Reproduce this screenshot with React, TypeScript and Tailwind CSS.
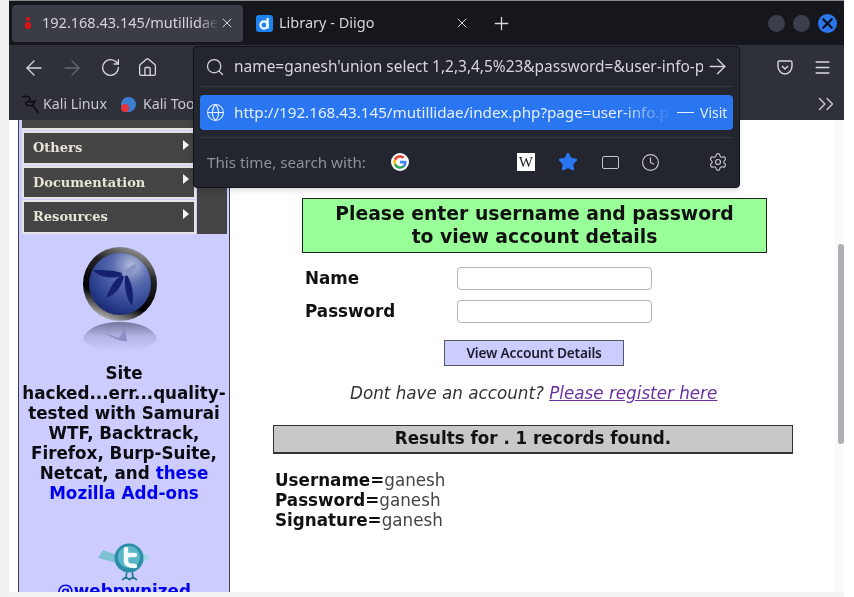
import { ArrowLeft, ArrowRight, ChevronsRight, Clock, Globe, Home, Menu, Plus, RotateCw, Search, Settings, Star, X } from 'lucide-react'

const UI_FONT = "font-['Noto_Sans',sans-serif]"
const PAGE_FONT = "font-['DejaVu_Sans',sans-serif]"

function OwaspLogo() {
  return (
    <svg width="78" height="106" viewBox="0 0 78 106" className="mr-[9px]">
      <defs>
        <linearGradient id="ring" x1="0.7" y1="0" x2="0.3" y2="1">
          <stop offset="0" stopColor="#9a9a9a" />
          <stop offset="0.3" stopColor="#222" />
          <stop offset="0.7" stopColor="#000" />
          <stop offset="1" stopColor="#c4c4c4" />
        </linearGradient>
        <radialGradient id="face" cx="0.68" cy="0.2" r="0.85">
          <stop offset="0" stopColor="#b4bcdc" />
          <stop offset="0.35" stopColor="#5a6db0" />
          <stop offset="0.8" stopColor="#2b3f90" />
          <stop offset="1" stopColor="#1b2a70" />
        </radialGradient>
        <linearGradient id="mirror" x1="0" y1="0" x2="0" y2="1">
          <stop offset="0" stopColor="#74779f" />
          <stop offset="0.5" stopColor="#b4b6e6" />
          <stop offset="1" stopColor="#ccccff" />
        </linearGradient>
      </defs>
      <circle cx="39" cy="38" r="37" fill="url(#ring)" />
      <circle cx="39" cy="38" r="31" fill="url(#face)" />
      <g fill="#15206e">
        <path d="M41 27 C32 24 22 24 12 24 C16 30 30 34 40 30 Z" />
        <path d="M41 29 C37 31 31 36 25 52 C33 49 39 44 43 31 Z" />
        <path d="M44 29 C43 38 44 50 51 60 C53 50 52 40 46 29 Z" />
      </g>
      <path d="M41 27 L50 20 C53 17 57 18 55 22 C53 26 48 29 44 30 Z" fill="#8a94c4" />
      <path d="M2 93 C6 81 22 76 39 76 C56 76 72 81 76 93 C70 103 56 106 39 106 C22 106 8 103 2 93 Z" fill="url(#mirror)" />
      <path d="M24 87 L38 92 L44 82 L46 95 C40 96 32 92 24 87 Z" fill="#8b8fc8" />
    </svg>
  )
}

function TwitterBird() {
  return (
    <svg width="54" height="38" viewBox="0 0 54 38">
      <path d="M1 15 L6 7 L20 12 L20 20 Z" fill="#7fc0d4" />
      <path d="M46 10 L53 15 L46 19 Z" fill="#9ad6e2" />
      <path d="M30 28 L29 34 M35 28 L36 34 M25 37 L29 34 L33 37 M32 37 L36 34 L40 37" stroke="#23798f" strokeWidth="1.600" fill="none" />
      <circle cx="32" cy="15" r="14.500" fill="#2b8ea6" />
      <circle cx="32" cy="14" r="11" fill="#5ab6c9" />
      <path d="M29 6 V18 C29 22 32 23 38 23 M29 12 H38" stroke="#f2fbfd" strokeWidth="4.500" fill="none" strokeLinecap="round" />
    </svg>
  )
}

function KaliDragon() {
  return (
    <svg width="17" height="19" viewBox="0 0 17 19" fill="none" stroke="#0d0d0f" strokeWidth="1.500" className="mb-[2px]">
      <path d="M0 2 C4 0 9 2 8 5 C7 8 3 6 4 9 C5 12 11 9 13 13 L16 18 M8 7 L13 6 L10 11" />
    </svg>
  )
}

function GoogleIcon() {
  return (
    <svg width="18" height="18" viewBox="0 0 48 48" className="rounded-full bg-white p-[2px]">
      <path fill="#EA4335" d="M24 9.500c3.500 0 6.700 1.300 9.100 3.500l6.800-6.800C35.800 2.400 30.300 0 24 0 14.600 0 6.600 5.400 2.600 13.200l7.900 6.100C12.400 13.600 17.700 9.500 24 9.500z" />
      <path fill="#4285F4" d="M46.900 24.500c0-1.600-.1-3.100-.4-4.500H24v9h12.900c-.6 3-2.200 5.500-4.700 7.200l7.700 6c4.500-4.200 7-10.300 7-17.700z" />
      <path fill="#FBBC05" d="M10.500 28.700c-.5-1.400-.8-3-.8-4.700s.3-3.200.8-4.700l-7.900-6.100C.9 16.500 0 20.100 0 24s.9 7.500 2.600 10.800l7.900-6.100z" />
      <path fill="#34A853" d="M24 48c6.500 0 11.900-2.100 15.900-5.800l-7.700-6c-2.200 1.400-4.900 2.300-8.200 2.300-6.300 0-11.600-4.200-13.500-9.800l-7.900 6.100C6.600 42.600 14.600 48 24 48z" />
    </svg>
  )
}

function DiigoIcon() {
  return (
    <svg width="17" height="17" viewBox="0 0 17 17">
      <rect width="17" height="17" rx="3" fill="#1c83f0" />
      <circle cx="8" cy="10" r="3.600" fill="none" stroke="#fff" strokeWidth="2.200" />
      <path d="M11.600 3 V13.500" stroke="#fff" strokeWidth="2.200" />
    </svg>
  )
}

function NavMenuItem({ label }: { label: string }) {
  return (
    <div className="flex h-[33.500px] w-[174px] items-center justify-between border-2 border-[#e4e4e4] bg-[#444444] pl-[9px] pr-[5px]">
      <span className="font-['DejaVu_Serif',serif] text-[13px] font-bold text-[#e9e4d8]">{label}</span>
      <span className="mb-[6px] h-0 w-0 border-y-[5px] border-l-[6px] border-y-transparent border-l-[#f4f4f4]" />
    </div>
  )
}

function BrowserChrome() {
  return (
    <header className={`${UI_FONT} shrink-0`}>
      <div className="flex h-[45px] items-center border-t border-[#8a8a8a] bg-[#16171c] pl-[3px] text-[14.500px] text-[#d4d5d9]">
        <div className="flex h-[37px] w-[231px] items-center rounded bg-[#3b3d46] pl-[9px] pr-[8px]">
          <span className="flex w-[21px] flex-col items-start gap-px pl-[4px]">
            <span className="ml-[1px] h-[4px] w-[4px] rounded-full bg-[#e01010]" />
            <span className="h-[7px] w-[6px] rounded-full bg-[#e01010]" />
          </span>
          <span className="min-w-0 flex-1 overflow-hidden whitespace-nowrap [mask-image:linear-gradient(to_right,black_88%,transparent)]">192.168.43.145/mutillidae</span>
          <X size={16} strokeWidth={1.500} />
        </div>
        <div className="flex w-[231px] items-center pl-[13px] pr-[4px]">
          <DiigoIcon />
          <span className="ml-[6px] flex-1">Library - Diigo</span>
          <X size={16} strokeWidth={1.500} />
        </div>
        <Plus size={21} strokeWidth={1.500} className="ml-[17px]" />
        <div className="ml-auto flex items-center gap-[8px] pr-[7px]">
          <span className="h-[17px] w-[17px] rounded-full bg-[#3a3f4b]" />
          <span className="h-[17px] w-[17px] rounded-full bg-[#3a3f4b]" />
          <span className="flex h-[19px] w-[19px] items-center justify-center rounded-full bg-[#2a76ee]">
            <X size={17} strokeWidth={3} color="#0d0d12" />
          </span>
        </div>
      </div>
      <div className="flex h-[45px] items-center bg-[#2f313a] pl-[13px] pr-[12px] text-[#d8d9dd]">
        <ArrowLeft size={24} strokeWidth={1.300} />
        <ArrowRight size={24} strokeWidth={1.300} className="ml-[14px] text-[#666872]" />
        <RotateCw size={21} strokeWidth={1.500} className="ml-[15.500px]" />
        <Home size={21} strokeWidth={1.500} className="ml-[16.500px]" />
        <svg width="16" height="15" viewBox="0 0 16 15" fill="none" stroke="#d8d9dd" strokeWidth="1.400" className="ml-auto mr-[20px]">
          <path d="M2 1 H14 C15 1 15 2 15 3 V6 C15 10 12 14 8 14 C4 14 1 10 1 6 V3 C1 2 1 1 2 1 Z M5 6 L8 9 L11 6" />
        </svg>
        <Menu size={19} strokeWidth={1.800} />
      </div>
      <div className="flex h-[30px] items-center bg-[#2f313a] pl-[13px] pr-[5px] text-[14.200px] text-[#c9cad0]">
        <KaliDragon />
        <span className="mb-[2px] ml-[4px]">Kali Linux</span>
        <span className="relative mb-[2px] ml-[14px] h-[15px] w-[15px] rounded-full bg-[#3a7fd0]">
          <span className="absolute bottom-0 left-0 h-[8px] w-[8px] rounded-full bg-[#e8343c]" />
        </span>
        <span className="mb-[2px] ml-[7px]">Kali Tools</span>
        <ChevronsRight size={26} strokeWidth={1.300} className="mb-[2px] ml-auto" />
      </div>
    </header>
  )
}

function UrlPopup() {
  return (
    <div className={`${UI_FONT} absolute left-[184px] top-[46px] w-[547px] rounded border border-[#14151a] bg-[#23252f] px-[6px] text-[15.200px] text-[#d5d6da] shadow-md`}>
      <div className="flex h-[40px] items-center border-b border-[#34363f] pl-[5px]">
        <Search size={20} strokeWidth={1.500} />
        <span className="ml-[9px] w-[469px] overflow-hidden whitespace-nowrap text-[15.450px]">name=ganesh'union select 1,2,3,4,5%23&amp;password=&amp;user-info-php-submit-button</span>
        <ArrowRight size={25} strokeWidth={1.300} className="ml-[2px]" />
      </div>
      <div className="mt-[7.500px] flex h-[35.500px] items-center rounded bg-[#2a76f0] pl-[6px] text-[#e6effd]">
        <Globe size={19} strokeWidth={1.300} />
        <span className="ml-[9px] w-[438px] overflow-hidden whitespace-nowrap [mask-image:linear-gradient(to_right,black_88%,transparent)]">http://192.168.43.145/mutillidae/index.php?page=user-info.php</span>
        <span className="ml-[5px] flex items-center gap-[6px] whitespace-nowrap text-[14px]">
          <span className="h-px w-[17px] bg-[#e6effd]" />
          Visit
        </span>
      </div>
      <div className="mt-[6.500px] flex h-[50px] items-center border-t border-[#34363f] pl-[7px] pr-[5.500px] text-[#8f9199]">
        <span>This time, search with:</span>
        <span className="ml-[25px] flex"><GoogleIcon /></span>
        <span className="ml-[108px] flex h-[18px] w-[18px] items-center justify-center bg-white font-['Liberation_Serif',serif] text-[15px] leading-none text-[#222]">W</span>
        <Star size={20} className="ml-[23px] fill-[#2a76f0] text-[#2a76f0]" />
        <span className="ml-[24px] h-[13px] w-[17px] rounded-[2px] border-[1.500px] border-[#c4c5ca]" />
        <Clock size={19} strokeWidth={1.500} className="ml-[22.500px] text-[#c4c5ca]" />
        <Settings size={20} strokeWidth={1.400} className="ml-auto text-[#c4c5ca]" />
      </div>
    </div>
  )
}

function Sidebar() {
  return (
    <aside className={`${PAGE_FONT} ml-[9px] flex h-[472px] w-[212px] shrink-0 flex-col overflow-hidden border-x border-[#3c3c50] bg-[#ccccff]`}>
      <div className="flex items-stretch">
        <div className="ml-[3px] flex flex-col gap-[1px]">
          <div className="h-[10px] w-[174px] border-b-2 border-[#e4e4e4] bg-[#444444]" />
          <NavMenuItem label="Others" />
          <NavMenuItem label="Documentation" />
          <NavMenuItem label="Resources" />
        </div>
        <div className="ml-[1px] w-[30px] bg-[#444444]" />
      </div>
      <div className="mt-[12px] flex justify-center">
        <OwaspLogo />
      </div>
      <p className="mt-[11px] text-center text-[16.750px] font-bold leading-[20px] text-[#0c0c10]">
        Site
        <br />
        hacked...err...quality-tested with Samurai WTF, Backtrack, Firefox, Burp-Suite, Netcat, and{' '}
        <span className="text-[#0000ee]">these Mozilla Add-ons</span>
      </p>
      <div className="mt-[40px] flex justify-center">
        <TwitterBird />
      </div>
      <p className="text-center text-[16.750px] font-bold leading-[20px] text-[#0000ee]">@webpwnized</p>
    </aside>
  )
}

function AccountForm() {
  return (
    <main className={`${PAGE_FONT} ml-[43px] w-[520px] pt-[78px] text-[16.750px] text-[#111]`}>
      <div className="ml-[29px] h-[55px] w-[465px] border border-[#222] bg-[#99ff99] pt-[3px] text-center text-[18.800px] font-bold leading-[23px]">
        Please enter username and password
        <br />
        to view account details
      </div>
      <div className="ml-[32px] mt-[14px] grid grid-cols-[152px_195px] items-center gap-y-[10px] font-bold leading-[23px]">
        <span>Name</span>
        <span className="h-[23px] rounded-sm border border-[#b4b4bc] bg-white" />
        <span>Password</span>
        <span className="h-[23px] rounded-sm border border-[#b4b4bc] bg-white" />
      </div>
      <div className="ml-[171px] mt-[17px] flex h-[26px] w-[180px] items-center justify-center border border-[#555566] bg-[#ccccff]">
        <span className={`${UI_FONT} text-[13.700px] font-semibold tracking-[-0.2px] text-[#1c1c2c]`}>View Account Details</span>
      </div>
      <p className="ml-[77px] mt-[16px] italic leading-[22px] text-[#333]">
        Dont have an account? <span className="text-[#6b2fa0] underline">Please register here</span>
      </p>
      <div className="mt-[21px] flex h-[29px] items-center justify-center border border-b-2 border-[#333] bg-[#c8c8c8] font-bold">
        Results for . 1 records found.
      </div>
      <div className="ml-[2px] mt-[16px] leading-[20px]">
        <div><b>Username=</b><span className="text-[#444]">ganesh</span></div>
        <div><b>Password=</b><span className="text-[#444]">ganesh</span></div>
        <div><b>Signature=</b><span className="text-[#444]">ganesh</span></div>
      </div>
    </main>
  )
}

export default function App() {
  return (
    <div className="flex h-[597px] w-[854px] overflow-hidden bg-white blur-[0.55px]">
      <div className="w-[9px] shrink-0 bg-[#f0f0f0]" />
      <div className="relative h-[597px] w-[835px] shrink-0 overflow-hidden bg-[#f3f3f3]">
        <div className="flex h-[592px] flex-col bg-white">
          <BrowserChrome />
          <div className="flex min-h-0 flex-1">
            <Sidebar />
            <AccountForm />
          </div>
        </div>
        <UrlPopup />
        {/* overlay scrollbar */}
        <div className="absolute bottom-[5px] right-0 top-[120px] w-[9px] bg-[#fafafa]">
          <div className="ml-[3px] mt-[124px] h-[200px] w-[6px] rounded-full bg-[#aeb0b6]" />
        </div>
      </div>
    </div>
  )
}
